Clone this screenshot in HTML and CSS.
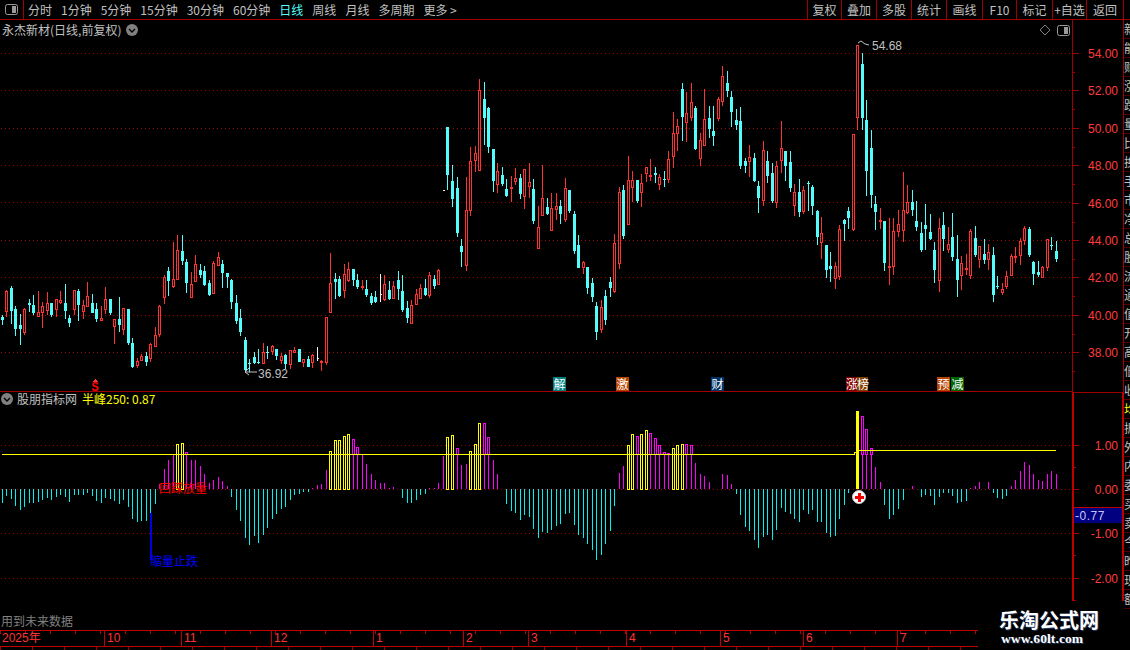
FILE: index.html
```html
<!DOCTYPE html>
<html lang="zh-CN">
<head>
  <meta charset="UTF-8">
  <title>永杰新材 日线</title>
  <link rel="stylesheet" href="styles.css">
</head>
<body>
  <div class="toolbar">
    <div class="layout-btn">
      <svg class="panel-icon" viewBox="0 0 13 11"><rect x="0.5" y="0.5" width="12" height="10" rx="2"/><rect class="panel-fill" x="7" y="2" width="4" height="7"/></svg>
    </div>
    <div class="tabs">
      <span>分时</span><span>1分钟</span><span>5分钟</span><span>15分钟</span><span>30分钟</span><span>60分钟</span>
      <span class="active">日线</span><span>周线</span><span>月线</span><span>多周期</span><span>更多 &gt;</span>
    </div>
    <div class="actions">
      <span>复权</span><span>叠加</span><span>多股</span><span>统计</span><span>画线</span><span>F10</span><span>标记</span><span>+自选</span><span>返回</span>
    </div>
  </div>

  <div class="workspace">
    <div class="charts">
      <div class="pane price-pane">
        <svg id="price" class="plot" viewBox="0 20 1072 371"></svg>
        <div class="pane-title">
          <span>永杰新材(日线,前复权)</span>
          <svg class="chevron" viewBox="0 0 12 12"><circle cx="6" cy="6" r="6"/><path d="M3 5l3 3 3-3"/></svg>
        </div>
        <div class="pane-tools">
          <svg class="diamond" viewBox="0 0 12 12"><path d="M6 1l5 5-5 5-5-5z"/></svg>
          <svg class="panel-icon" viewBox="0 0 13 11"><rect x="0.5" y="0.5" width="12" height="10" rx="2"/><rect class="panel-fill" x="7" y="2" width="4" height="7"/></svg>
        </div>
        <span class="chip chip-teal chip-jie">解</span>
        <span class="chip chip-orange chip-ji">激</span>
        <span class="chip chip-navy chip-cai">财</span>
        <span class="chip chip-maroon chip-zhang">涨</span>
        <span class="chip chip-brown chip-bang">榜</span>
        <span class="chip chip-orange chip-yu">预</span>
        <span class="chip chip-green chip-jian">减</span>
      </div>
      <div class="pane indicator-pane">
        <svg id="indicator" class="plot" viewBox="0 392 1072 238"></svg>
        <div class="pane-title indicator-title">
          <svg class="chevron" viewBox="0 0 12 12"><circle cx="6" cy="6" r="6"/><path d="M3 5l3 3 3-3"/></svg>
          <span>股朋指标网</span>
          <span class="value">半峰250: 0.87</span>
        </div>
        <div class="future-note">用到未来数据</div>
      </div>
      <div class="timeline">
        <span>2025年</span><span>10</span><span>11</span><span>12</span><span>1</span><span>2</span><span>3</span><span>4</span><span>5</span><span>6</span><span>7</span>
      </div>
      <div class="status-ticks"></div>
    </div>
    <div class="axis">
      <svg id="price-axis" class="axis-price" viewBox="1072 20 52 372"></svg>
      <svg id="indicator-axis" class="axis-indicator" viewBox="1072 392 52 209"></svg>
    </div>
    <div id="side" class="side"></div>
  </div>

  <div class="watermark">
    <div class="wm-name">乐淘公式网</div>
    <div class="wm-url">www.60lt.com</div>
  </div>

  <script src="chart.js"></script>
</body>
</html>
```

FILE: styles.css
```css
* {
  box-sizing: border-box;
}
html, body {
  margin: 0;
  height: 650px;
  overflow: hidden;
  background-color: #000;
}
body {
  display: flex;
  flex-direction: column;
  position: relative;
  color: #c0c0c0;
  font: 12px/14px "Noto Sans CJK SC", sans-serif;
}

.toolbar {
  display: flex;
  flex: none;
  height: 20px;
  border-bottom: 1px solid #a00000;
}
.layout-btn {
  display: flex;
  align-items: center;
  justify-content: center;
  width: 24px;
  border-right: 1px solid #a00000;
}
.panel-icon {
  width: 13px;
  height: 11px;
}
.panel-icon rect {
  fill: none;
  stroke: #9a9a9a;
}
.panel-icon .panel-fill {
  fill: #9a9a9a;
  stroke: none;
}
.tabs {
  display: flex;
  align-items: center;
  gap: 9px;
  padding-left: 4px;
  white-space: nowrap;
  line-height: 19px;
}
.tabs .active {
  color: #54fcfc;
}
.actions {
  display: grid;
  grid-template-columns: 34px 35px 35px 35px 36px 34px 36px 34px 37px;
  margin-left: auto;
  margin-right: 6px;
  border-right: 1px solid #a00000;
  line-height: 19px;
  text-align: center;
  white-space: nowrap;
}
.actions span {
  border-left: 1px solid #a00000;
}

.workspace {
  display: flex;
  flex: 1;
  min-height: 0;
}
.charts {
  display: flex;
  flex: none;
  flex-direction: column;
  width: 1072px;
}
.pane {
  position: relative;
  flex: none;
}
.price-pane {
  height: 372px;
  border-bottom: 1px solid #a00000;
}
.indicator-pane {
  height: 238px;
}
.plot {
  display: block;
  width: 1072px;
  shape-rendering: crispEdges;
}
#price {
  height: 371px;
}
#indicator {
  height: 238px;
}

.pane-title {
  position: absolute;
  top: 3px;
  left: 2px;
  display: flex;
  align-items: center;
  gap: 5px;
  white-space: nowrap;
}
.indicator-title {
  top: 0;
  left: 1px;
  gap: 4px;
}
.indicator-title .value {
  margin-left: 1px;
  color: #ffff00;
}
.chevron {
  width: 12px;
  height: 12px;
}
.chevron circle {
  fill: #808080;
}
.chevron path {
  fill: none;
  stroke: #000;
  stroke-width: 1.4;
}
.pane-tools {
  position: absolute;
  top: 4px;
  right: 2px;
  display: flex;
  align-items: center;
  gap: 6px;
}
.diamond {
  width: 12px;
  height: 12px;
}
.diamond path {
  fill: none;
  stroke: #808080;
}

.chip {
  position: absolute;
  top: 357px;
  width: 13px;
  height: 14px;
  color: #fff;
  line-height: 14px;
  text-align: center;
}
.chip-teal { background-color: #008080; }
.chip-orange { background-color: #b84400; }
.chip-navy { background-color: #003366; }
.chip-maroon { background-color: #800000; }
.chip-brown { background-color: #804000; }
.chip-green { background-color: #006400; }
.chip-jie { left: 553px; }
.chip-ji { left: 616px; }
.chip-cai { left: 711px; }
.chip-zhang { left: 846px; width: 11px; }
.chip-bang { left: 857px; width: 11px; }
.chip-yu { left: 937px; }
.chip-jian { left: 951px; }

.future-note {
  position: absolute;
  left: 1px;
  top: 222px;
  color: #808080;
}

.timeline {
  display: grid;
  flex: none;
  grid-template-columns: 104px 77px 90px 102px 90px 65px 98px 94px 83px 94px 81px;
  width: 978px;
  height: 17px;
  border-top: 1px solid #c00000;
  border-bottom: 1px solid #c00000;
  background: repeating-linear-gradient(90deg, #c00000 0, #c00000 1px, transparent 1px, transparent 25px) 0 0 / 100% 3px no-repeat;
  color: #ff3232;
  font-family: "Liberation Sans", "Noto Sans CJK SC", sans-serif;
  line-height: 15px;
}
.timeline span {
  padding-left: 2px;
  background-color: transparent;
  border-left: 1px solid #c00000;
}
.timeline span:first-child {
  border-left: none;
}
.status-ticks {
  width: 978px;
  height: 3px;
  background: repeating-linear-gradient(90deg, #a00000 0, #a00000 1px, transparent 1px, transparent 32px);
}

.axis {
  flex: none;
  width: 52px;
}
.axis svg {
  display: block;
  width: 52px;
  shape-rendering: crispEdges;
}
.axis-price {
  height: 372px;
}
.axis-indicator {
  height: 209px;
}
.axis-text {
  fill: #ff3c3c;
  font: 12px "Liberation Sans", sans-serif;
  text-anchor: end;
}
.axis-last {
  fill: #c8c8ff;
  font: 12px "Liberation Sans", sans-serif;
  letter-spacing: 0.5px;
}
.axis-line {
  fill: #a00000;
}
.axis-line-strong {
  fill: #c00000;
}
.axis-flag {
  fill: #000080;
}

.side {
  flex: none;
  width: 6px;
  overflow: hidden;
}
.side-row {
  height: 19px;
  border-bottom: 1px solid #500000;
  line-height: 18px;
  white-space: nowrap;
}
.side-row.marked {
  color: #ffff00;
}

/* price plot */
.grid-dot {
  fill: none;
  stroke: #a00000;
  stroke-dasharray: 1 3;
}
.wick-up, .body-fill-up { fill: #ff3232; }
.body-up {
  fill: #000;
  stroke: #ff3232;
}
.wick-down, .body-down { fill: #54fcfc; }
.wick-flat { fill: #f0f0f0; }
.leader {
  fill: none;
  stroke: #c0c0c0;
  shape-rendering: auto;
}
.price-tag {
  fill: #c0c0c0;
  font: 12px "Liberation Sans", sans-serif;
}
.sell-mark {
  fill: #ff0000;
  font: bold 12px "Liberation Mono", monospace;
  text-anchor: middle;
}

/* indicator plot */
.bar-down { fill: #00f0f0; }
.bar-up { fill: #ff00ff; }
.box-up {
  fill: #000;
  stroke: #ff00ff;
}
.box-yellow {
  fill: #000;
  stroke: #ffff00;
}
.spike { fill: #ffff00; }
.half-line {
  fill: none;
  stroke: #ffff00;
}
.blue-line { fill: #0000e0; }
.note-red {
  fill: #ff0000;
  font: 12px "Noto Sans CJK SC", sans-serif;
}
.note-blue {
  fill: #0000ff;
  font: 12px "Noto Sans CJK SC", sans-serif;
}
.cursor-dot {
  fill: #fff;
  stroke: #c8c8c8;
  shape-rendering: auto;
}
.cursor-plus {
  fill: #f00000;
}

.watermark {
  position: absolute;
  left: 999px;
  top: 608px;
  color: #fff;
  text-shadow: 1px 1px 0 #223a66;
}
.wm-name {
  font-weight: 700;
  font-size: 20px;
  line-height: 23px;
}
.wm-url {
  margin: 0 0 0 2px;
  font: bold 13.5px/15px "Liberation Serif", serif;
  letter-spacing: 0.1px;
}
```

FILE: chart.js
```js
// Candles are kept as: colour + high,top,bottom,low. Numbers were read from 3x crops,
// so each block has its own y origin and gets divided by 3.
var candleBlocks = [
  { y0: 225, rows: "c270,276,285,300 r195,198,262,276 c183,189,258,297 c243,252,311,333 c267,300,312,360 r250,252,323,329 c222,234,240,262 c210,240,264,270 r198,262,275,276 r232,243,265,309 r201,234,258,270 c234,234,271,276 r222,222,255,276 r198,225,234,237 c177,234,258,282 c270,279,294,306 r195,195,255,270 c192,198,240,288 r225,240,261,282 r171,213,246,246 c207,234,264,264 c234,252,282,291 r243,279,288,288 r186,222,255,267 c222,222,264,270 r282,282,305,357 c216,282,300,321 r249,249,315,330 c252,252,354,360 c339,354,427,429 r400,408,423,429 r387,393,408,408 c381,393,411,423 r354,357,402,411 r306,330,366,366 r240,243,330,336 r150,156,219,237 c126,138,168,213 r51,162,186,188 r30,75,165,165 c30,78,108,120 c102,111,174,204 r141,177,219,219 r90,117,171,171 c117,135,150,159 c123,138,180,183 c165,174,210,213 r108,114,207,207 r81,96,123,123 c105,117,144,189 c144,144,156,189 c162,165,231,252 c210,234,288,297 c252,279,321,333 c336,345,435,440 c402,414,416,441 c381,396,414,417 c372,411,414,417 r354,381,417,417 c363,381,384,402 r360,363,381,390 c372,372,393,405 r384,393,408,417 c387,390,417,432 r375,375,420,432 r366,375,384,384 c372,372,411,411 r402,402,414,426 c393,402,426,426 r387,390,414,429 w366,400,402,408 r405,408,411,438 r276,276,414,420 r84,174,264,264 c144,162,171,222 c153,162,213,216 r117,147,198,219 r111,132,168,171 c132,132,165,183 c147,165,186,192 r165,183,189,195 c165,192,210,216 c204,213,234,240 c198,216,231,234 w147,207,209,231 r150,177,225,228 c168,195,222,225 r168,183,222,222 c138,165,192,225 c150,198,255,261 c228,249,279,294 r225,240,297,297 r192,207,240,240 r177,189,222,222 c162,189,210,213 r141,150,213,219 c150,162,183,192 r132,135,180,180" },
  { y0: 70, rows: "w360,360,362,362 c171,171,315,360 c285,333,387,411 c321,354,489,501 c507,528,546,591 r321,420,588,603 r232,273,423,438 r228,249,273,306 r27,60,303,303 c36,87,144,225 c111,114,231,249 c237,237,333,366 r279,303,345,369 c291,315,342,348 c327,357,378,381 r318,351,357,396 r294,324,336,345 c312,324,372,387 r297,297,381,417 r279,336,351,384 c327,357,453,462 r408,471,537,537 r285,384,438,438 c384,411,432,435 r369,414,483,483 r369,408,420,450 c390,408,432,462 r324,354,450,456 c360,360,423,429 c423,432,543,552 c495,525,594,594 r573,576,594,612" },
  { y0: 0, rows: "c801,801,864,882 c834,849,891,906 c906,918,996,1020 r900,921,990,999 c870,888,960,975" },
  { y0: 60, rows: "c651,665,684,710 r522,549,695,699 r381,396,611,627 c375,390,528,537 r288,360,495,495 r333,360,384,426 c360,360,423,429 r342,369,399,441 r321,321,342,366 r297,345,348,363 c321,339,345,369 r342,351,375,390 c333,357,360,381 r273,297,360,369 r156,219,291,324 r177,198,222,273 c69,87,171,243 r96,159,189,246 r69,126,174,183 c138,144,267,270 r219,240,297,318 r87,177,258,258 c138,174,207,234 c138,213,228,258 r111,117,177,183 r18,48,126,138 c33,69,93,111 c93,111,156,201 c147,180,195,210 c141,183,318,327 c294,303,318,339 r255,291,306,351 c279,294,363,366 c363,378,414,459 r243,270,423,438 c273,303,348,369 c309,339,423,429 r303,318,429,444 r183,264,303,339 c273,273,318,363 c273,306,384,396 r372,396,438,468 c357,396,456,471 r378,390,456,462 c363,369,372,453 c375,381,438,465 c450,453,531,555 r471,519,549,597 c555,555,630,654 c576,618,627,666 r606,618,657,687" },
  { y0: 150, rows: "r225,237,381,390 c207,210,222,273 c171,183,204,237 r-48,-48,240,243 r-315,-315,-96,-60 c-291,-258,-96,-60 c-150,-90,63,138 c-60,-6,135,174 c138,162,186,240 r174,210,216,237 c213,213,339,363 r204,348,354,405 r204,243,351,375 r180,222,246,261 r66,180,243,276 r105,156,189,192 c120,156,180,198 c153,213,231,243 c216,249,300,306 c162,225,237,300 c192,246,267,270 c276,300,360,399 r204,234,392,426 c186,225,267,303 r231,282,300,309 c189,261,321,333 c255,327,390,441 r318,339,378,420 r312,354,356,375 r237,243,378,387 c228,264,315,321 r288,288,330,354 c267,312,330,342 r282,306,330,360 c291,315,435,456 c378,408,411,417 r399,417,429,435 r363,378,411,417 r312,318,378,378 r291,318,324,339 r264,273,318,345 r228,234,273,285 c231,237,315,321 c333,336,372,405 c333,366,375,381 r348,351,384,384 r267,267,354,363 c261,285,288,300 c273,303,327,336" }
];

// Indicator bars, in the same 3x units, measured from the zero line (up is positive).
var bars = [-41,-21,-30,-51,-62,-54,-42,-42,-39,-33,-27,-33,-24,-18,-24,-39,-18,-18,-18,-12,-21,-36,-42,-27,-30,-36,-45,-33,-54,-90,-99,-96,-96,-72,-45,15,60,87,102,135,138,111,87,87,69,45,17,27,36,24,9,-24,-63,-96,-147,-168,-141,-162,-138,-117,-90,-75,-60,-54,-33,-18,-15,-9,-9,3,12,15,57,114,147,147,159,165,150,126,102,75,45,27,18,18,3,6,1,-27,-42,-42,-33,-18,-15,3,3,18,99,156,162,123,72,75,114,135,198,198,156,87,45,0,-45,-66,-72,-93,-78,-84,-120,-147,-129,-132,-123,-111,-105,-75,-72,-108,-138,-147,-165,-183,-213,-198,-165,-126,-51,48,69,132,165,159,165,177,168,153,132,111,108,123,132,135,135,132,78,45,39,21,0,0,45,42,15,-15,-78,-114,-126,-153,-177,-144,-138,-153,-123,-58,-68,-75,-90,-99,-63,-75,-63,-100,-100,-132,-144,-141,-90,-48,-12,0,234,219,180,123,66,21,-48,-90,-78,-60,-33,0,9,0,-24,-18,-21,-48,-24,-12,-12,-21,-42,-39,-36,3,9,21,0,21,-12,-27,-30,-21,9,27,54,81,72,45,27,24,45,54,45];
var yellowBars = [39,40,73,74,75,76,77,99,100,104,105,106,139,140,142,143,149,150,151];

var ZERO_Y = 489;
var HALF_Y = 454;

function colX(i) {
  return Math.floor(2 + 4.505 * i);
}

function rect(cls, x, y, w, h) {
  return '<rect class="' + cls + '" x="' + x + '" y="' + y + '" width="' + w + '" height="' + h + '"/>';
}

function dots(y, w) {
  return '<line class="grid-dot" x1="1" x2="' + w + '" y1="' + (y + 0.5) + '" y2="' + (y + 0.5) + '"/>';
}

function drawCandle(kind, x, hi, top, bot, lo) {
  var out = "";
  var wick = kind === "r" ? "wick-up" : (kind === "c" ? "wick-down" : "wick-flat");
  if (top > hi) out += rect(wick, x, hi, 1, top - hi);
  if (lo > bot) out += rect(wick, x, bot, 1, lo - bot);
  if (kind === "r") {
    var h = Math.max(bot - top, 2);
    out += rect("body-up", x - 0.5, top + 0.5, 2, h - 1);
  } else if (kind === "c") {
    out += rect("body-down", x - 1, top, 3, Math.max(bot - top, 1));
  } else {
    out += rect(wick, x, top, 2, Math.max(bot - top, 1));
  }
  return out;
}

function drawPrice() {
  var html = "";
  var levels = [53, 90, 128, 165, 202, 240, 277, 315, 352];
  for (var k = 0; k < levels.length; k++) {
    html += dots(levels[k], 1072);
  }

  var index = 0;
  candleBlocks.forEach(function(block) {
    block.rows.split(" ").forEach(function(row) {
      var v = row.slice(1).split(",").map(function(n) {
        return Math.round(block.y0 + parseInt(n, 10) / 3);
      });
      html += drawCandle(row.charAt(0), colX(index), v[0], v[1], v[2], v[3]);
      index++;
    });
  });

  // high and low tags
  html += '<path class="leader" d="M858 43 l3 -2 4 3 4 1"/>';
  html += '<text class="price-tag" x="872" y="50">54.68</text>';
  html += '<path class="leader" d="M249 368 l-4 4 4 3 M245 372 H257"/>';
  html += '<text class="price-tag" x="258" y="378">36.92</text>';

  // sell mark
  html += '<path class="wick-up" d="M95 379 l3 3 h-6z"/>';
  html += '<text class="sell-mark" x="95" y="391">S</text>';

  document.getElementById("price").innerHTML = html;
}

function drawIndicator() {
  var html = "";
  [445, 489, 533, 578].forEach(function(y) {
    html += dots(y, 1072);
  });

  bars.forEach(function(val, i) {
    var x = colX(i);
    var h = Math.round(Math.abs(val) / 3);
    if (val === 0) return;
    if (i === 190) {
      html += rect("spike", x - 1, ZERO_Y - h, 3, h);
    } else if (yellowBars.indexOf(i) !== -1) {
      html += rect("box-yellow", x - 0.5, ZERO_Y - h + 0.5, 2, h);
    } else if (val < 0) {
      html += rect("bar-down", x, ZERO_Y, 1, h);
    } else {
      html += rect("bar-up", x, ZERO_Y - h, 1, h);
      if (ZERO_Y - h < HALF_Y) {
        html += rect("box-up", x - 0.5, ZERO_Y - h + 0.5, 2, HALF_Y - (ZERO_Y - h));
      }
    }
  });

  html += '<polyline class="half-line" points="2,454.5 854,454.5 855,452.5 857,452.5 860,450.5 1056,450.5"/>';

  html += rect("blue-line", 150, 513, 2, 47);
  html += '<text class="note-red" x="159" y="493">回踩放量</text>';
  html += '<text class="note-blue" x="150" y="566">缩量止跌</text>';

  html += '<circle class="cursor-dot" cx="859" cy="497" r="6.5"/>';
  html += rect("cursor-plus", 855, 496, 9, 3);
  html += rect("cursor-plus", 858, 493, 3, 9);

  document.getElementById("indicator").innerHTML = html;
}

function drawAxes() {
  var html = rect("axis-line", 1072, 20, 1, 372) + rect("axis-line", 1123, 20, 1, 372);
  var prices = ["54.00", "52.00", "50.00", "48.00", "46.00", "44.00", "42.00", "40.00", "38.00"];
  prices.forEach(function(p, i) {
    var y = Math.round(53 + i * 37.4);
    html += rect("axis-line", 1072, y, 7, 1);
    html += rect("axis-line", 1072, y + 19, 3, 1);
    html += '<text class="axis-text" x="1118" y="' + (y + 5) + '">' + p + '</text>';
  });
  document.getElementById("price-axis").innerHTML = html;

  html = rect("axis-line-strong", 1072, 392, 2, 209) + rect("axis-line-strong", 1122, 392, 2, 209);
  html += rect("axis-line", 1072, 392, 52, 1);
  [["1.00", 445], ["0.00", 489], ["-1.00", 533], ["-2.00", 578]].forEach(function(t) {
    html += rect("axis-line", 1074, t[1], 5, 1);
    html += rect("axis-line", 1074, t[1] + 22, 2, 1);
    html += '<text class="axis-text" x="1118" y="' + (t[1] + 5) + '">' + t[0] + '</text>';
  });
  html += rect("axis-line-strong", 1074, 507, 48, 1);
  html += rect("axis-flag", 1074, 508, 48, 15);
  html += '<text class="axis-last" x="1075" y="520">-0.77</text>';
  document.getElementById("indicator-axis").innerHTML = html;
}

function drawSide() {
  var names = "新能财涨跌量比换手市净总股流通值开高低收均振外内委买卖今昨现额";
  var html = "";
  for (var i = 0; i < names.length; i++) {
    html += '<div class="side-row' + (i === 20 ? " marked" : "") + '">' + names.charAt(i) + '</div>';
  }
  document.getElementById("side").innerHTML = html;
}

drawPrice();
drawIndicator();
drawAxes();
drawSide();
```
